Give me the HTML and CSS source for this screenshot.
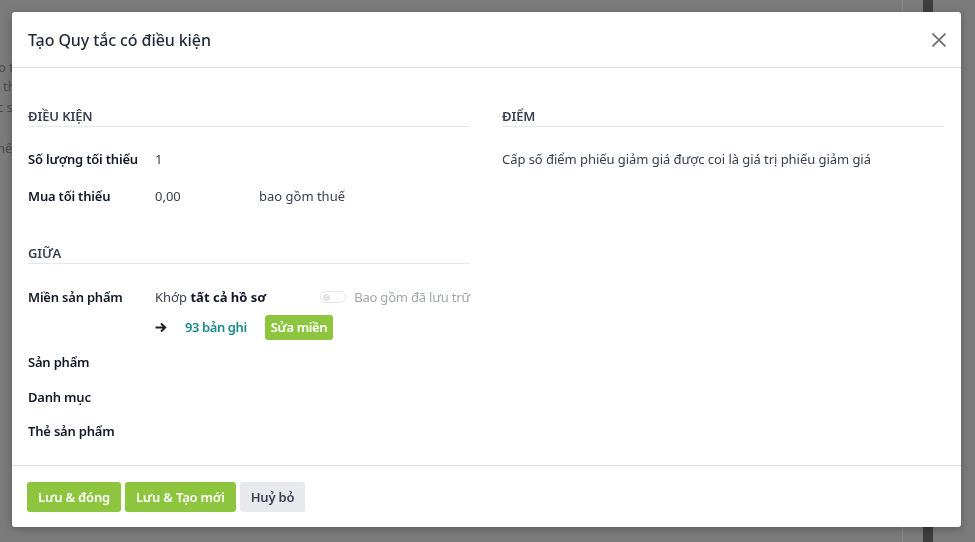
FILE: index.html
```html
<!DOCTYPE html>
<html lang="vi">
<head>
<meta charset="utf-8">
<title>Tạo Quy tắc có điều kiện</title>
<link rel="stylesheet" href="styles.css">
</head>
<body>
<div class="page">
  <div class="bg-text">
    <p class="bg-l1">o th</p>
    <p class="bg-l2">th</p>
    <p class="bg-l3">c s</p>
    <p class="bg-l4">hế</p>
  </div>
  <div class="bg-fill"></div>
  <div class="bg-rule"></div>
  <div class="bg-gap"></div>
  <div class="bg-scroll"></div>
  <div class="bg-end"></div>
</div>

<div class="modal">
  <header class="modal-header">
    <h4 class="modal-title">Tạo Quy tắc có điều kiện</h4>
    <button class="close" aria-label="Đóng">
      <svg width="14" height="14" viewBox="0 0 14 14"><path d="M0.5 0.5 L13.5 13.5 M13.5 0.5 L0.5 13.5" stroke="#6b6b6b" stroke-width="1.6" fill="none"/></svg>
    </button>
  </header>

  <main class="modal-body">
    <div class="cols">
      <div class="col">
        <div class="sep">ĐIỀU KIỆN</div>
        <div class="row row-tall"><div class="label">Số lượng tối thiểu</div><div class="val">1</div></div>
        <div class="row row-tall"><div class="label">Mua tối thiểu</div><div class="val"><span class="amount">0,00</span><span>bao gồm thuế</span></div></div>

        <div class="sep sep-2">GIỮA</div>
        <div class="row row-domain">
          <div class="label">Miền sản phẩm</div>
          <div class="val domain">
            <div class="domain-top">
              <span>Khớp <b>tất cả hồ sơ</b></span>
              <span class="archived"><span class="toggle"><span class="knob"></span></span>Bao gồm đã lưu trữ</span>
            </div>
            <div class="domain-bottom">
              <svg class="arrow" width="12" height="11" viewBox="0 0 12 11"><path d="M0.5 5.5 H10 M6 1.5 L10.2 5.5 L6 9.5" stroke="#222" stroke-width="2" fill="none"/></svg>
              <span class="records">93 bản ghi</span>
              <button class="btn btn-green btn-sm">Sửa miền</button>
            </div>
          </div>
        </div>
        <div class="row row-short"><div class="label">Sản phẩm</div><div class="val"></div></div>
        <div class="row row-short"><div class="label">Danh mục</div><div class="val"></div></div>
        <div class="row row-short"><div class="label">Thẻ sản phẩm</div><div class="val"></div></div>
      </div>

      <div class="col">
        <div class="sep">ĐIỂM</div>
        <div class="row row-tall"><div class="plain">Cấp số điểm phiếu giảm giá được coi là giá trị phiếu giảm giá</div></div>
      </div>
    </div>
  </main>

  <footer class="modal-footer">
    <button class="btn btn-green">Lưu &amp; đóng</button>
    <button class="btn btn-green">Lưu &amp; Tạo mới</button>
    <button class="btn btn-light">Huỷ bỏ</button>
  </footer>
</div>
</body>
</html>
```

FILE: styles.css
```css
* { box-sizing: border-box; }
html, body { margin: 0; height: 100%; }
body {
  background: #7b7b7b;
  font-family: "Noto Sans", "Open Sans", sans-serif;
  font-size: 13px;
  color: #374151;
  overflow: hidden;
}

.page {
  display: flex;
  height: 542px;
}
.bg-text {
  width: 40px;
  padding-top: 58px;
  color: #4b4b4b;
  font-size: 13px;
  white-space: nowrap;
  overflow: hidden;
}
.bg-text p { margin: 0; line-height: 19px; }
.bg-l1 { margin-left: -2px !important; }
.bg-l2 { margin-left: 3px !important; }
.bg-l3 { margin-left: -3px !important; margin-top: 2px !important; }
.bg-l4 { margin-left: -3px !important; margin-top: 22px !important; }
.bg-fill { flex: 0 0 862px; }
.bg-rule { flex: 0 0 1px; background: #8a8a8a; }
.bg-gap { flex: 0 0 20px; }
.bg-scroll { flex: 0 0 10px; background: #3e3e3e; }
.bg-end { flex: 1; }

.modal {
  position: fixed;
  left: 12px;
  top: 12px;
  width: 949px;
  height: 515px;
  background: #fff;
  border-radius: 3px;
  box-shadow: 0 2px 8px rgba(0,0,0,.25);
  display: flex;
  flex-direction: column;
}

.modal-header {
  height: 56px;
  flex: 0 0 56px;
  display: flex;
  align-items: center;
  justify-content: space-between;
  padding: 0 15px 0 16px;
  border-bottom: 1px solid #dee2e6;
}
.modal-title {
  margin: 0;
  font-size: 16px;
  font-weight: 500;
  color: #1f2937;
  letter-spacing: -0.1px;
}
.close {
  border: 0;
  background: none;
  padding: 0;
  width: 14px;
  height: 14px;
  display: flex;
}

.modal-body {
  flex: 1;
  padding: 38px 17px 0 16px;
}
.cols {
  display: grid;
  grid-template-columns: 442px 442px;
  column-gap: 32px;
}

.sep {
  font-weight: 600;
  color: #374151;
  line-height: 20px;
  border-bottom: 1px solid #e5e7eb;
  margin-bottom: 14px;
  letter-spacing: -0.1px;
}
.sep-2 { margin-top: 28px; }

.row {
  display: flex;
  align-items: flex-start;
  min-height: 35px;
  line-height: 35px;
}
.row-tall { min-height: 36px; line-height: 37px; }
.row-short { min-height: 34.5px; line-height: 34.5px; }
.label {
  flex: 0 0 127px;
  font-weight: 600;
  color: #111827;
  letter-spacing: -0.2px;
}
.val { flex: 1; display: flex; color: #374151; }
.amount { width: 104px; }
.plain { color: #374151; letter-spacing: -0.05px; }

.row-domain { margin-bottom: 3px; }
.row-domain .label { line-height: 38px; }
.domain { flex-direction: column; }
.domain-top {
  display: flex;
  justify-content: space-between;
  align-items: center;
  height: 38px;
}
.domain-top b { font-weight: 700; color: #111827; }
.archived {
  display: flex;
  align-items: center;
  color: #a3a6ab;
  letter-spacing: -0.2px;
}
.toggle {
  width: 26px;
  height: 12px;
  border-radius: 6px;
  background: #fff;
  border: 1px solid #e3e5e8;
  margin-right: 8px;
  display: flex;
  align-items: center;
  padding-left: 2px;
}
.knob { width: 7px; height: 7px; border-radius: 50%; background: #e2e4e7; }
.domain-bottom {
  display: flex;
  align-items: center;
  height: 30px;
  margin-top: -4px;
}
.arrow { margin-right: 18px; }
.records { color: #1a8a8f; font-weight: 600; margin-right: 18px; letter-spacing: -0.4px; }

.btn {
  border: 0;
  border-radius: 3px;
  font-family: inherit;
  font-size: 13px;
  font-weight: 600;
  height: 30px;
  padding: 0 11px;
  letter-spacing: -0.2px;
  cursor: pointer;
}
.btn-green { background: #8dc53e; color: #fff; }
.btn-light { background: #e7e9ed; color: #374151; }
.btn-sm { height: 25px; padding: 0 6px; line-height: 25px; font-size: 13px; letter-spacing: -0.4px; }

.modal-footer {
  flex: 0 0 62px;
  border-top: 1px solid #dee2e6;
  padding: 16px 15px 0 15px;
  display: flex;
  align-items: flex-start;
  gap: 4px;
}
```
